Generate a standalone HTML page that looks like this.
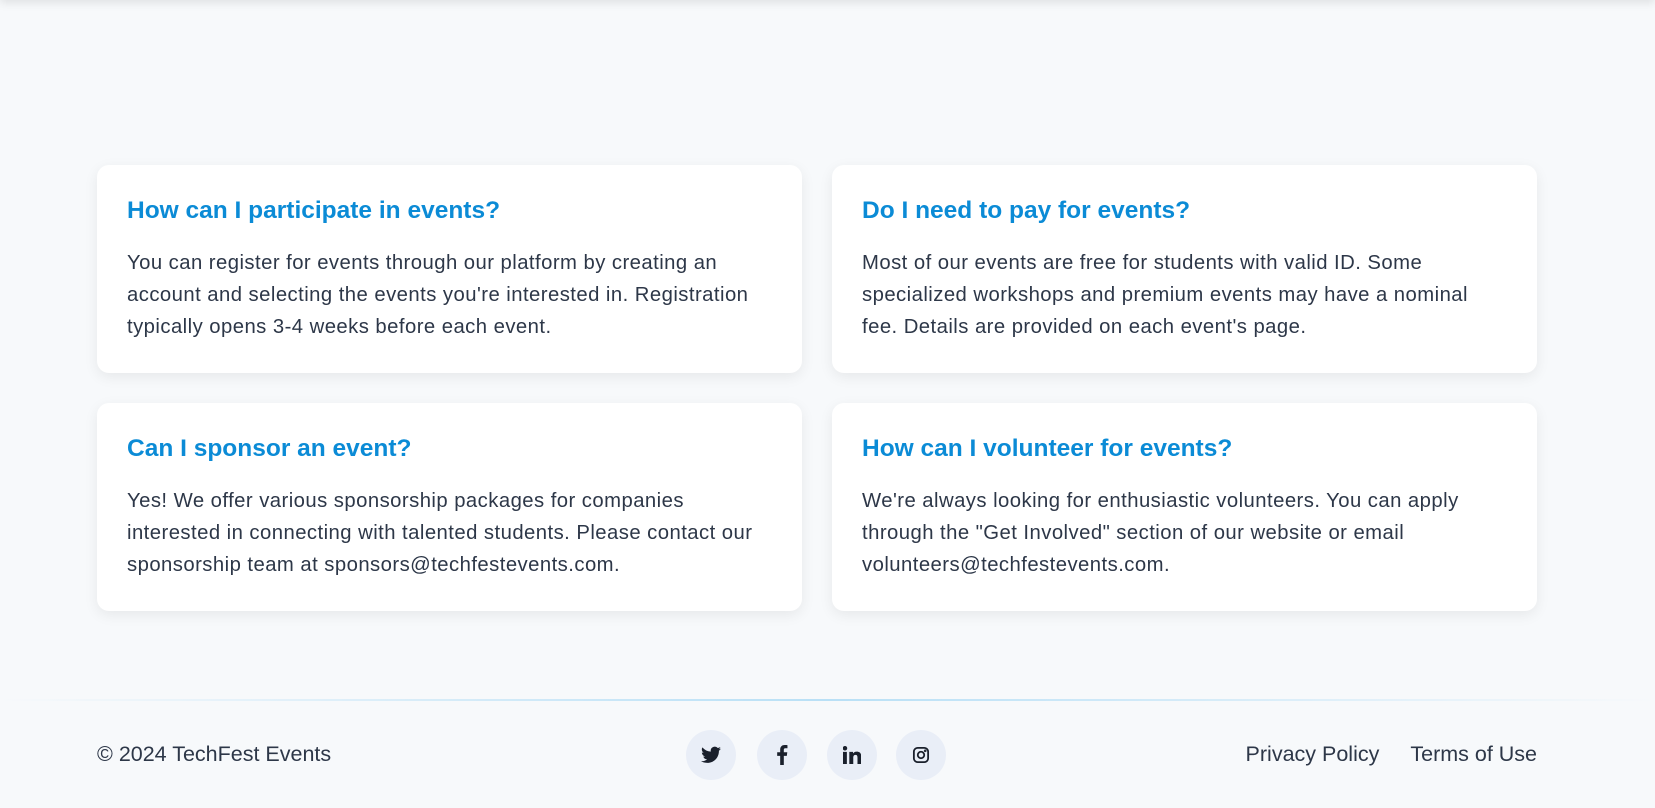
<!DOCTYPE html>
<html><head><style>
*{margin:0;padding:0;box-sizing:border-box}
body{width:1655px;height:808px;background:#f7f9fb;font-family:"Liberation Sans",sans-serif;position:relative;overflow:hidden;color:#2d3748}
.top{position:absolute;left:0;top:-10px;width:100%;height:10px;box-shadow:0 2px 10px rgba(0,0,0,.12)}
.card{position:absolute;width:705px;height:208px;background:#fff;border-radius:12px;box-shadow:0 4px 14px rgba(0,0,0,.07);padding:0 30px}
.card h3{position:absolute;left:30px;top:32px;font-size:24.5px;font-weight:bold;color:#0b8bd6;white-space:nowrap}
.card p{position:absolute;left:30px;top:82px;width:636px;font-size:20.3px;letter-spacing:0.45px;line-height:32px;color:#2d3748}
.line{position:absolute;left:0;top:699px;width:100%;height:2px;background:linear-gradient(90deg,rgba(190,225,245,0),#b9e0f6 50%,rgba(190,225,245,0))}
.ft{position:absolute;top:742px;font-size:21.5px;color:#2d3748;white-space:nowrap}
.links{position:absolute;right:118px;top:742px;font-size:21.5px;display:flex;gap:31px}
.ic{position:absolute;top:730px;width:50px;height:50px;border-radius:50%;background:#e9eef7;display:flex;align-items:center;justify-content:center}
</style></head><body>
<div class="top"></div>
<div class="card" style="left:97px;top:165px"><h3>How can I participate in events?</h3><p>You can register for events through our platform by creating an account and selecting the events you're interested in. Registration typically opens 3-4 weeks before each event.</p></div>
<div class="card" style="left:832px;top:165px"><h3>Do I need to pay for events?</h3><p>Most of our events are free for students with valid ID. Some specialized workshops and premium events may have a nominal fee. Details are provided on each event's page.</p></div>
<div class="card" style="left:97px;top:403px"><h3>Can I sponsor an event?</h3><p>Yes! We offer various sponsorship packages for companies interested in connecting with talented students. Please contact our sponsorship team at sponsors@techfestevents.com.</p></div>
<div class="card" style="left:832px;top:403px"><h3>How can I volunteer for events?</h3><p>We're always looking for enthusiastic volunteers. You can apply through the "Get Involved" section of our website or email volunteers@techfestevents.com.</p></div>
<div class="line"></div>
<div class="ft" style="left:97px">© 2024 TechFest Events</div>
<div class="ic" style="left:686px"><svg width="20" height="18" viewBox="0 0 24 20"><path fill="#1a202c" d="M24 2.4a9.8 9.8 0 0 1-2.8.8A4.9 4.9 0 0 0 23.3.4a9.8 9.8 0 0 1-3.1 1.2A4.9 4.9 0 0 0 11.8 6 14 14 0 0 1 1.7.9a4.9 4.9 0 0 0 1.5 6.6A4.9 4.9 0 0 1 1 6.9a4.9 4.9 0 0 0 3.9 4.8 4.9 4.9 0 0 1-2.2.1 4.9 4.9 0 0 0 4.6 3.4A9.9 9.9 0 0 1 0 17.3 14 14 0 0 0 7.5 19.5c9.1 0 14-7.5 14-14v-.6A10 10 0 0 0 24 2.4z"/></svg></div>
<div class="ic" style="left:757px"><svg width="12" height="20" viewBox="0 0 12 22"><path fill="#1a202c" d="M8 22V12h3.3l.5-4H8V5.5c0-1.1.3-1.9 1.9-1.9H12V.2C11.6.1 10.4 0 9 0 6 0 4 1.8 4 5.2V8H.7v4H4v10z"/></svg></div>
<div class="ic" style="left:827px"><svg width="18" height="18" viewBox="0 0 20 20"><path fill="#1a202c" d="M0 6.5h4.3V20H0zM2.2 0a2.5 2.5 0 1 1 0 5 2.5 2.5 0 0 1 0-5zM7 6.5h4.1v1.9c.6-1.1 2-2.2 4.1-2.2 4.4 0 5.2 2.9 5.2 6.6V20h-4.3v-6.5c0-1.6 0-3.6-2.2-3.6s-2.5 1.7-2.5 3.5V20H7z"/></svg></div>
<div class="ic" style="left:896px"><svg width="18" height="18" viewBox="0 0 24 24" fill="none" stroke="#1a202c" stroke-width="2.4"><rect x="2.5" y="2.5" width="19" height="19" rx="5"/><circle cx="12" cy="12" r="4.3"/><circle cx="17.6" cy="6.4" r=".6" fill="#1a202c"/></svg></div>
<div class="links"><span>Privacy Policy</span><span>Terms of Use</span></div>
</body></html>
